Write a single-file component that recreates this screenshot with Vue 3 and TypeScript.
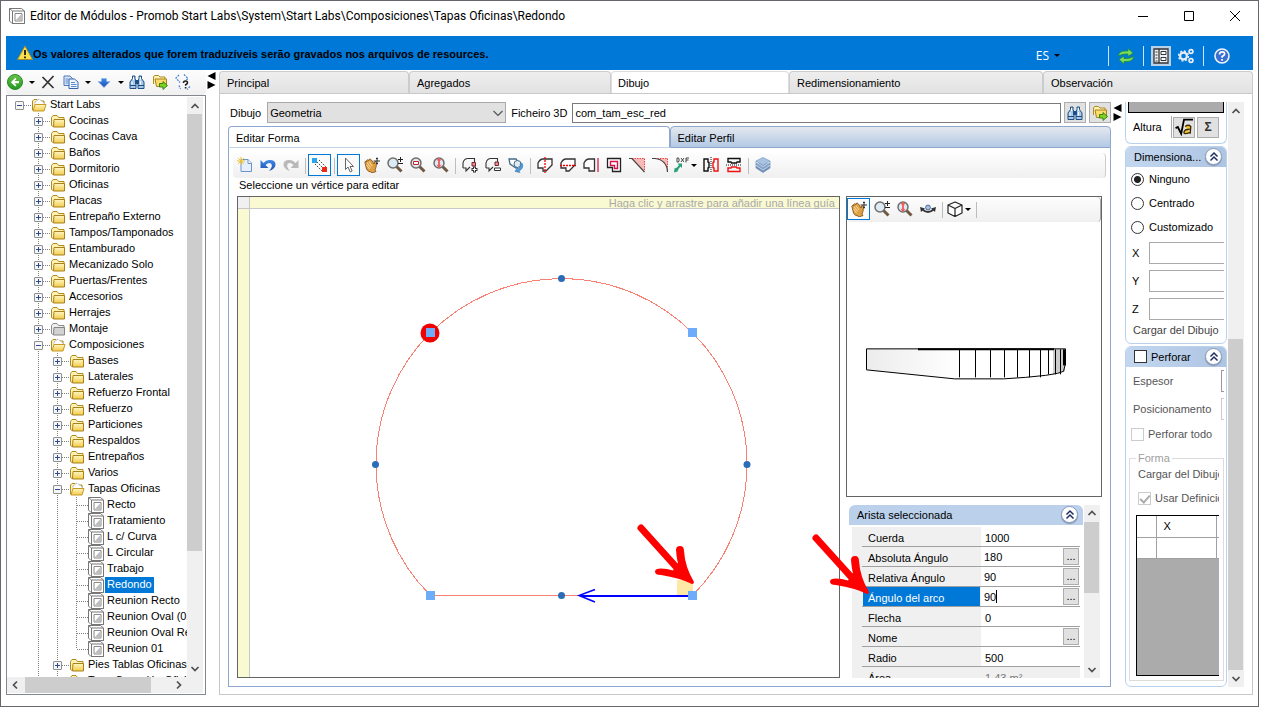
<script setup lang="ts">
import { ref } from 'vue'

interface TreeNode {
  label: string
  level: number
  kind: 'open' | 'folder' | 'gray' | 'module'
  toggle?: '+' | '-'
  last?: boolean
}

const folders = (level: number, labels: string[]): TreeNode[] =>
  labels.map((label) => ({ label, level, kind: 'folder', toggle: '+' }))

const modules = ['Recto', 'Tratamiento', 'L c/ Curva', 'L Circular', 'Trabajo', 'Redondo', 'Reunion Recto', 'Reunion Oval (02)', 'Reunion Oval Recto', 'Reunion 01']

const tree: TreeNode[] = [
  { label: 'Start Labs', level: 0, kind: 'open', toggle: '-' },
  ...folders(1, ['Cocinas', 'Cocinas Cava', 'Baños', 'Dormitorio', 'Oficinas', 'Placas', 'Entrepaño Externo', 'Tampos/Tamponados', 'Entamburado', 'Mecanizado Solo', 'Puertas/Frentes', 'Accesorios', 'Herrajes']),
  { label: 'Montaje', level: 1, kind: 'gray', toggle: '+' },
  { label: 'Composiciones', level: 1, kind: 'open', toggle: '-' },
  ...folders(2, ['Bases', 'Laterales', 'Refuerzo Frontal', 'Refuerzo', 'Particiones', 'Respaldos', 'Entrepaños', 'Varios']),
  { label: 'Tapas Oficinas', level: 2, kind: 'open', toggle: '-' },
  ...modules.map((label, i): TreeNode => ({ label, level: 3, kind: 'module', last: i === modules.length - 1 })),
  ...folders(2, ['Pies Tablas Oficinas', 'Tapa Conexión Oficinas']),
]

const selected = ref('Redondo')
const tabs = ['Principal', 'Agregados', 'Dibujo', 'Redimensionamiento', 'Observación']
const activeTab = ref('Dibujo')

interface Tool { icon: string; title: string; active?: boolean; caret?: boolean }
const toolGroups: Tool[][] = [
  [{ icon: 'new', title: 'Nuevo' }, { icon: 'undo', title: 'Deshacer' }, { icon: 'redo', title: 'Rehacer' }],
  [{ icon: 'snap', title: 'Vértices', active: true }],
  [
    { icon: 'cursor', title: 'Seleccionar', active: true },
    { icon: 'hand', title: 'Mover' },
    { icon: 'zoom', title: 'Zoom' },
    { icon: 'zoomrect', title: 'Zoom ventana' },
    { icon: 'zoomfit', title: 'Zoom extendido' },
  ],
  [{ icon: 'polyadd', title: 'Añadir vértice' }, { icon: 'polydel', title: 'Quitar vértice' }, { icon: 'polyrot', title: 'Rotar' }],
  [
    { icon: 'splitv', title: 'Dividir vertical' },
    { icon: 'splith', title: 'Dividir horizontal' },
    { icon: 'edge', title: 'Borde' },
    { icon: 'offset', title: 'Desplazar' },
    { icon: 'chamfer', title: 'Chaflán' },
    { icon: 'fillet', title: 'Redondear' },
    { icon: 'dxf', title: 'Importar DXF', caret: true },
    { icon: 'mirrorh', title: 'Espejo horizontal' },
    { icon: 'mirrorv', title: 'Espejo vertical' },
  ],
  [{ icon: 'layers', title: 'Capas' }],
]

interface Prop { id: string; label: string; value: string; more?: boolean; muted?: boolean }
const props = ref<Prop[]>([
  { id: 'cuerda', label: 'Cuerda', value: '1000' },
  { id: 'abs', label: 'Absoluta Ángulo', value: '180', more: true },
  { id: 'rel', label: 'Relativa Ángulo', value: '90', more: true },
  { id: 'arco', label: 'Ángulo del arco', value: '90', more: true },
  { id: 'flecha', label: 'Flecha', value: '0' },
  { id: 'nome', label: 'Nome', value: '', more: true },
  { id: 'radio', label: 'Radio', value: '500' },
  { id: 'area', label: 'Área', value: '1,43 m²', muted: true },
])
const activeProp = ref('arco')

const dimension = ref('Ninguno')
const dimensions = ['Ninguno', 'Centrado', 'Customizado']
const facets = [112, 128, 143, 157, 170, 182, 193, 201, 208, 213]
</script>

<template>
  <svg class="defs" aria-hidden="true">
    <defs>
      <linearGradient id="gFolder" x1="0" y1="0" x2="0" y2="1"><stop offset="0" stop-color="#fff6c0" /><stop offset="1" stop-color="#f2cb4a" /></linearGradient>
      <linearGradient id="gGreen" x1="0" y1="0" x2="0" y2="1"><stop offset="0" stop-color="#6cc24a" /><stop offset="1" stop-color="#1f9a1f" /></linearGradient>
      <linearGradient id="gBlue" x1="0" y1="0" x2="0" y2="1"><stop offset="0" stop-color="#3f8be8" /><stop offset="1" stop-color="#1c50b0" /></linearGradient>
      <linearGradient id="gFace" x1="0" y1="0" x2="1" y2="0"><stop offset="0" stop-color="#ececec" /><stop offset="1" stop-color="#ffffff" /></linearGradient>
      <symbol id="folder" viewBox="0 0 16 16"><path d="M1.5 12.5v-8l1.5-2h4l1.5 2h5.5v9h-11z" fill="#fdf3b4" stroke="#b08a1c" /><path d="M4 6.5h10.5v7.5h-11z" fill="url(#gFolder)" stroke="#a8821a" /></symbol>
      <symbol id="gray" viewBox="0 0 16 16"><path d="M1.5 12.5v-8l1.5-2h4l1.5 2h5.5v9h-11z" fill="#eee" stroke="#8c8c8c" /><path d="M4 6.5h10.5v7.5h-11z" fill="#d2d2d2" stroke="#858585" /></symbol>
      <symbol id="open" viewBox="0 0 16 16"><path d="M1.5 13v-9l1.5-1.5h3l1 1.500h6v9z" fill="#fdf3b4" stroke="#b08a1c" /><path d="M4 5l4-3 5 4v3H4z" fill="#fff" stroke="#8ba3c4" stroke-dasharray="1 1" /><path d="M4 7.500h11l-2 6.500h-11z" fill="url(#gFolder)" stroke="#c49a2a" /></symbol>
      <symbol id="module" viewBox="0 0 16 16"><path d="M.5.5h12l3 2.500v12.500h-12.500l-2.500-2.500z" fill="#fff" stroke="#777" /><path d="M3.500 3h12v12.500h-12zM.5.5l3 2.500" fill="none" stroke="#777" /><path d="M6 5.500h7v7.500h-7z" fill="#fff" stroke="#888" /><path d="M12.500 6v6.500h-6z" fill="#bdbdbd" /></symbol>
      <symbol id="back" viewBox="0 0 16 16"><circle cx="8" cy="8" r="7.500" fill="url(#gGreen)" stroke="#2b8a2b" /><path d="M12 7H7.500L9.500 5 8.300 3.800 3.800 8.200l4.500 4.300 1.200-1.200L7.500 9.300H12z" fill="#fff" /></symbol>
      <symbol id="cross" viewBox="0 0 16 16"><path d="M2.500 3l11 11M13.500 2l-11 12" stroke="#333" stroke-width="1.700" fill="none" /></symbol>
      <symbol id="copy" viewBox="0 0 16 16"><path d="M1 2h6l2.500 2.500v7H1z" fill="#dbe8fa" stroke="#4e78b8" /><path d="M6 5h5.500l3.500 3v6.500H6z" fill="#eef5ff" stroke="#3565ad" /><path d="M2.500 5h3M2.500 7h3M2.500 9h3M8 8.500h4M8 10.500h5.500M8 12.500h5.500" stroke="#5b8bd0" /></symbol>
      <symbol id="down" viewBox="0 0 16 16"><path d="M5.500 4.500h5v3h3.500L8 13.500 2 7.500h3.500z" fill="url(#gBlue)" stroke="#8fb4e8" stroke-width=".6" /></symbol>
      <symbol id="binoc" viewBox="0 0 16 16"><path d="M1 14.500V8l2.500-3.500V2h2.500v2.500L7 7v7.500z" fill="#a9c8e8" stroke="#1d4f86" /><path d="M15 14.500V8l-2.500-3.500V2H10v2.500L9 7v7.500z" fill="#a9c8e8" stroke="#1d4f86" /><path d="M6.500 6.500h3v3h-3zM1 11.500h6M9 11.500h6" fill="#1d4f86" stroke="#1d4f86" /><path d="M3 7.500v3M11.500 7v3.500M4.500 3v3M11.300 3v3" stroke="#fff" /></symbol>
      <symbol id="go" viewBox="0 0 16 16"><path d="M1.500 10V3l1-1.500h4L8 3h5v3" fill="#fdf3b4" stroke="#b08a1c" /><path d="M3 5h11.500v7.500h-10z" fill="#fbdc6c" stroke="#a8821a" /><path d="M7.500 9.500h3.500V7.500l4.500 4-4.500 4v-2.500H7.500z" fill="#7ed321" stroke="#30780d" stroke-width=".9" /></symbol>
      <symbol id="helpb" viewBox="0 0 16 16"><path d="M4 1L1 4l4 4.500M9 .5l4 4-2.500 2.500M4 11.500l1.500 3.500M15 12.500l-3 3" stroke="#4b82d8" stroke-dasharray="2 1" fill="none" stroke-width="1.300" /><path d="M8.500 9q0-2 2-2t2 1.800q0 1.200-1.800 1.900v1M10.600 13v1.500" stroke="#222" stroke-width="1.600" fill="none" /></symbol>
      <symbol id="new" viewBox="0 0 16 16"><path d="M4 2.500h7l3.500 3.500v8.500H4z" fill="#e6effc" stroke="#6d93cc" /><path d="M11 2.500v4h3.500" fill="#fff" stroke="#6d93cc" /><path d="M4 0v8M0 4h8M1.200 1.200l5.600 5.600M6.800 1.200L1.200 6.800" stroke="#edc12c" /></symbol>
      <symbol id="undo" viewBox="0 0 16 16"><path d="M.5 3v8h8L5.500 8q3-3 5.500-1.500Q13.500 9 9 14q7-2.500 6.500-7T9 3Q6 3 3.500 6z" fill="url(#gBlue)" /></symbol>
      <symbol id="redo" viewBox="0 0 16 16"><path d="M15.500 3v8h-8l3-3q-3-3-5.500-1.500Q2.500 9 7 14 0 11.500.5 7T7 3q3 0 5.500 3z" fill="#b9b9b9" /></symbol>
      <symbol id="snap" viewBox="0 0 16 16"><path d="M3 7l7 7M5 5l7 7M7 3l7 7" stroke="#444" stroke-dasharray="1.500 1.200" /><path d="M0 1h5v5H0z" fill="#2aa5ef" /><path d="M10 10h5v5h-5z" fill="#ec2a16" /></symbol>
      <symbol id="cursor" viewBox="0 0 16 16"><path d="M4.500 1v11.500L7 10l2.200 5 2-1L9 9.500h3.500z" fill="#fff" stroke="#666" /></symbol>
      <symbol id="hand" viewBox="0 0 16 16"><path d="M.8 5q1-1.500 2.200 0L2.500 3.500q1-1.500 2.500 0L5 2.500q1.500-1 2.500.5l2.500 4 .5-2q1.500-1 2 .5 0 5-1.500 7.500l1 1.500-4 1.500-1-1q-3 0-4.500-3z" fill="#dfa044" stroke="#7a4a12" stroke-width=".8" /><path d="M3 5.500l3.500 5M5 4.500l3 4.500M2.500 8l3 4" stroke="#fbe3ae" stroke-width=".9" /><path d="M13 .500v7M9.500 4H16M12 1.500h2M12 6.500h2" stroke="#333" /></symbol>
      <symbol id="lens" viewBox="0 0 16 16"><path d="M9 9l5.500 5.500" stroke="#6f5941" stroke-width="3" /><circle cx="6" cy="6" r="5" fill="#dceaf3" stroke="#6e6e6e" stroke-width="1.500" /></symbol>
      <symbol id="zoom" viewBox="0 0 16 16"><use href="#lens" /><path d="M13.500 0v5M11 2.500h5M11 6.500h5" stroke="#222" /></symbol>
      <symbol id="zoomrect" viewBox="0 0 16 16"><use href="#lens" /><path d="M3.500 4.500h5v3h-5z" fill="#fff" stroke="#c22" /></symbol>
      <symbol id="zoomfit" viewBox="0 0 16 16"><use href="#lens" /><path d="M6 2v7.500M4.500 3.500L6 2l1.500 1.500M4.500 8L6 9.500 7.500 8" stroke="#f45a5a" stroke-width="1.800" fill="none" /></symbol>
      <symbol id="polyadd" viewBox="0 0 16 16"><path d="M1 11V6q1-4.500 5-4.500h6.500V5M1 11h3v3l4-4" fill="none" stroke="#333" stroke-width="1.100" /><path d="M10 5.500h3.500V9H10z" fill="#f58a94" stroke="#6f2b30" /><path d="M12.500 9.500v6M9.500 12.500h6" stroke="#333" stroke-width="3" /><path d="M12.500 10.500v4M10.500 12.500h4" stroke="#fff" /></symbol>
      <symbol id="polydel" viewBox="0 0 16 16"><path d="M1 11V6q1-4.500 5-4.500h6.500V5M1 11h3v3l4-4" fill="none" stroke="#333" stroke-width="1.100" /><path d="M10 5h3.500v3.500H10z" fill="#f58a94" stroke="#6f2b30" /><path d="M9.500 11h6v2.500h-6z" fill="#fff" stroke="#333" /></symbol>
      <symbol id="polyrot" viewBox="0 0 16 16"><path d="M1 2h7l3 4-3 5-6-4z" fill="#fff" stroke="#456d88" stroke-width="1.300" /><circle cx="9.500" cy="7" r="3.500" fill="#dfeaf2" stroke="#456d88" /><path d="M14 6q2.500 5-3 8l1 1.500-5-1 2.500-4 .8 1.500q3-2 1.700-5z" fill="#4f9adc" stroke="#2d6ba4" stroke-width=".5" /></symbol>
      <symbol id="splitv" viewBox="0 0 16 16"><path d="M1 11V6q2-4 5-4h9v6l-6 6H6v-3z" fill="#fff" stroke="#333" stroke-width="1.300" /><path d="M8 0v16" stroke="#e00" stroke-dasharray="2 1" stroke-width="1.300" /></symbol>
      <symbol id="splith" viewBox="0 0 16 16"><path d="M1 11V6q2-4 5-4h9v6l-6 6H6v-3z" fill="#fff" stroke="#333" stroke-width="1.300" /><path d="M0 8.500h16" stroke="#e00" stroke-dasharray="2 1" stroke-width="1.300" /></symbol>
      <symbol id="edge" viewBox="0 0 16 16"><path d="M11.500 2H6Q3 2 1 6v5h5v3h5.500z" fill="#fff" stroke="#333" stroke-width="1.300" /><path d="M15 1v14" stroke="#d8204a" stroke-width="1.300" /></symbol>
      <symbol id="offset" viewBox="0 0 16 16"><path d="M1.500 1.500h13v13h-8v-4h-5z" fill="#fff" stroke="#222" stroke-width="1.300" /><path d="M4.500 4.500h7v7h-3v-3h-4z" fill="#fff" stroke="#d8104a" stroke-width="1.400" /></symbol>
      <symbol id="chamfer" viewBox="0 0 16 16"><path d="M2 1.500h13.500V14z" fill="#f8b9b9" /><path d="M3 1.500h12.500v13" stroke="#e44" stroke-dasharray="1.500 1" fill="none" /><path d="M0 1.500h3L15.500 15" stroke="#444" fill="none" stroke-width="1.200" /></symbol>
      <symbol id="fillet" viewBox="0 0 16 16"><path d="M4 1.500h11.500V12Q13 3 4 1.500z" fill="#f8b9b9" /><path d="M3 1.500h12.500v13" stroke="#e44" stroke-dasharray="1.500 1" fill="none" /><path d="M0 1.500h3Q15 3 15.500 15" stroke="#444" fill="none" stroke-width="1.200" /></symbol>
      <symbol id="dxf" viewBox="0 0 16 16"><path d="M4 5V1h1.500q1.500 2 0 4zM8 1l3 4M11 1L8 5M13 5.500V1h3M13 3h2.500" fill="none" stroke="#333" stroke-width=".9" /><path d="M1 15.500l.500-4 2.500-1 2-2.500L4.500 6.500H9V11L7.500 9.500 5.500 12l-1 2.500z" fill="#28a078" /></symbol>
      <symbol id="mirrorh" viewBox="0 0 16 16"><path d="M1 2h4v3l1 .5v5L5 11v3H1z" fill="none" stroke="#111" stroke-width="1.400" /><path d="M15 2h-4v3l-1 .5v5l1 .5v3h4z" fill="none" stroke="#e11" stroke-width="1.400" /><path d="M8 0v16" stroke="#111" stroke-dasharray="1 1" /></symbol>
      <symbol id="mirrorv" viewBox="0 0 16 16"><path d="M2 1.500h12V5h-3l-.5 1h-5L5 5H2z" fill="none" stroke="#111" stroke-width="1.400" /><path d="M2 14.500h12V11h-3l-.5-1h-5L5 11H2z" fill="none" stroke="#e11" stroke-width="1.400" /><path d="M0 8h16" stroke="#111" stroke-dasharray="1 1" /></symbol>
      <symbol id="layers" viewBox="0 0 16 16"><path d="M1 11l7 4.500 7-4.500V9H1z" fill="#6f8fb8" /><path d="M1 8l7 4.500L15 8V6H1z" fill="#88a6cc" /><path d="M1 8.500l7 4.500 7-4.500M1 5l7 4.500L15 5" stroke="#e6eef8" stroke-width=".7" fill="none" /><path d="M8 .5l7 3.500-7 4.500L1 4z" fill="#a9c3e2" stroke="#6c8db6" stroke-width=".6" /><path d="M1 4v7l7 4.500L15 11V4" fill="none" stroke="#6c8db6" stroke-width=".7" /></symbol>
      <symbol id="orbit" viewBox="0 0 16 16"><circle cx="8" cy="6.500" r="2.400" fill="#a9c4e6" stroke="#4b6a94" /><path d="M2.500 8.500q5.500 5 11 0" stroke="#333" stroke-width="1.700" fill="none" /><path d="M0 6l5 1.500-4 3.500zM16 6l-5 1.500 4 3.500z" fill="#333" /></symbol>
      <symbol id="cube" viewBox="0 0 16 16"><path d="M1 4l7-3 7 3v8l-7 3.500L1 12zM1 4l7 3.500L15 4M8 7.500v8" fill="#fff" stroke="#222" stroke-width="1.200" stroke-linejoin="round" /></symbol>
      <symbol id="refresh" viewBox="0 0 16 16"><path d="M.5 8Q1 3 7 3h3V.5l5 4.500-5 3.500V6H7Q4 6 .5 8z" fill="#7bdc5a" stroke="#1e8a3a" stroke-width=".8" /><path d="M15.500 8.500q-.5 5-6.500 5H6v2.500L1 11.500 6 8v2.500h3q3 0 6.500-2z" fill="#7bdc5a" stroke="#1e8a3a" stroke-width=".8" /></symbol>
      <symbol id="form" viewBox="0 0 16 16"><path d="M1 1h14v14H1zM6 1v14" fill="#eef2f6" stroke="#333" stroke-width="1.300" /><path d="M2.500 4h2M2.500 7h2M2.500 10h2M2.500 13h2" stroke="#333" /><path d="M8 3.500h5v3H8zM8 9.500h5v3H8z" fill="#fff" stroke="#333" /></symbol>
      <symbol id="gears" viewBox="0 0 16 16"><circle cx="5.500" cy="8" r="3.400" fill="none" stroke="#e8eef5" stroke-width="2.200" /><circle cx="5.500" cy="8" r="5" fill="none" stroke="#e8eef5" stroke-width="1.400" stroke-dasharray="2 1.900" /><circle cx="13" cy="3.500" r="1.900" fill="none" stroke="#e8eef5" stroke-width="1.700" /><circle cx="13" cy="12.500" r="1.900" fill="none" stroke="#e8eef5" stroke-width="1.700" /></symbol>
      <symbol id="help" viewBox="0 0 16 16"><circle cx="8" cy="8" r="7" fill="#3b6fd0" stroke="#eef3fb" stroke-width="1.600" /><path d="M5.500 6.500q0-2.700 2.600-2.700t2.500 2.200q0 1.300-2.500 2.600v1.200M8.100 11v1.800" stroke="#fff" stroke-width="1.700" fill="none" /></symbol>
      <symbol id="warn" viewBox="0 0 16 16"><path d="M8 1l7.500 13.500H.5z" fill="#fbe04a" stroke="#a88a28" stroke-linejoin="round" /><path d="M8 5v5M8 11.500v1.800" stroke="#222" stroke-width="1.900" /></symbol>
      <symbol id="root" viewBox="0 0 16 16"><path d="M.5 9l2-1 3 6L8 1.500h8" stroke="#000" stroke-width="1.600" fill="none" /><path d="M9 7.500q3-2 5 0l-.500 6.500M13 10q-4.500 0-5 2.500t5 .5" fill="#f7c62e" stroke="#3a2a00" stroke-width="1.200" /></symbol>
      <symbol id="chev" viewBox="0 0 16 16"><path d="M4.500 7.500L8 4l3.500 3.500M4.500 11.500L8 8l3.500 3.500" stroke="#1f2f63" stroke-width="1.500" fill="none" /></symbol>
      <symbol id="up" viewBox="0 0 10 10"><path d="M1.500 7L5 3.500 8.500 7" stroke="#505050" stroke-width="1.700" fill="none" /></symbol>
      <symbol id="dn" viewBox="0 0 10 10"><path d="M1.500 3L5 6.500 8.500 3" stroke="#505050" stroke-width="1.700" fill="none" /></symbol>
      <symbol id="lf" viewBox="0 0 10 10"><path d="M7 1.500L3.500 5 7 8.500" stroke="#505050" stroke-width="1.700" fill="none" /></symbol>
      <symbol id="rt" viewBox="0 0 10 10"><path d="M3 1.500L6.500 5 3 8.500" stroke="#505050" stroke-width="1.700" fill="none" /></symbol>
      <symbol id="pointer" viewBox="0 0 60 62"><path d="M5 5L42 46" stroke="#f00" stroke-width="7" stroke-linecap="round" /><path d="M44 23q4 0 4 5 1 16 10 31 0 2-2 2-12-6-31-9-6 0-6-3.500 0-3 6-3 6 0 12 2l5-8Q41 38 40 27q0-4 4-4z" fill="#f00" /></symbol>
    </defs>
  </svg>

  <div class="window">
    <header class="titlebar">
      <svg class="i16"><use href="#module" /></svg>
      <h1>Editor de Módulos - Promob Start Labs\System\Start Labs\Composiciones\Tapas Oficinas\Redondo</h1>
      <button class="win" aria-label="Minimizar"><svg viewBox="0 0 12 12"><path d="M1 6.500h10" stroke="#000" /></svg></button>
      <button class="win" aria-label="Maximizar"><svg viewBox="0 0 12 12"><path d="M1.500 1.500h9v9h-9z" stroke="#000" fill="none" /></svg></button>
      <button class="win" aria-label="Cerrar"><svg viewBox="0 0 12 12"><path d="M1 1l10 10M11 1L1 11" stroke="#000" /></svg></button>
    </header>

    <div class="banner">
      <svg class="i16"><use href="#warn" /></svg>
      <strong>Os valores alterados que forem traduzíveis serão gravados nos arquivos de resources.</strong>
      <button class="lang">ES<i class="caret"></i></button>
      <span class="bsep"></span>
      <button class="bbtn" aria-label="Actualizar"><svg class="i16"><use href="#refresh" /></svg></button>
      <span class="bsep"></span>
      <button class="bbtn on" aria-label="Formulario"><svg class="i16"><use href="#form" /></svg></button>
      <button class="bbtn gear" aria-label="Configuración"><svg class="i16"><use href="#gears" /></svg></button>
      <span class="bsep"></span>
      <button class="bbtn last" aria-label="Ayuda"><svg class="i16"><use href="#help" /></svg></button>
    </div>

    <div class="main">
      <aside class="left">
        <div class="lefttools">
          <button aria-label="Atrás"><svg class="i16"><use href="#back" /></svg></button>
          <button class="drop" aria-label="Historial"><i class="caret"></i></button>
          <button aria-label="Eliminar"><svg class="i16"><use href="#cross" /></svg></button>
          <button class="gap" aria-label="Copiar"><svg class="i16"><use href="#copy" /></svg></button>
          <button class="drop" aria-label="Opciones de copia"><i class="caret"></i></button>
          <button aria-label="Bajar"><svg class="i16"><use href="#down" /></svg></button>
          <button class="drop" aria-label="Opciones de orden"><i class="caret"></i></button>
          <button aria-label="Buscar"><svg class="i16"><use href="#binoc" /></svg></button>
          <button class="gap" aria-label="Ir a carpeta"><svg class="i16"><use href="#go" /></svg></button>
          <button class="gap" aria-label="Referencias"><svg class="i16"><use href="#helpb" /></svg></button>
        </div>
        <div class="treebox">
          <div class="treerow">
            <ul class="tree" role="tree">
              <li v-for="(n, i) in tree" :key="i" role="treeitem" @click="selected = n.label">
                <span v-for="c in n.level + 1" :key="c" class="cell" :class="{ line: c > 1, end: n.last && c === n.level + 1, own: c === n.level + 1 }">
                  <button v-if="n.toggle && c === n.level + 1" class="toggle" :class="{ plus: n.toggle === '+' }" :aria-label="n.label"></button>
                </span>
                <svg class="i16 nodeicon"><use :href="'#' + n.kind" /></svg>
                <span class="label" :class="{ sel: n.label === selected }">{{ n.label }}</span>
              </li>
            </ul>
            <div class="vbar">
              <button aria-label="Subir"><svg><use href="#up" /></svg></button>
              <div class="track"><div class="thumb tree-thumb"></div></div>
              <button aria-label="Bajar"><svg><use href="#dn" /></svg></button>
            </div>
          </div>
          <div class="hbar">
            <button aria-label="Izquierda"><svg><use href="#lf" /></svg></button>
            <div class="htrack"><div class="hthumb"></div></div>
            <button aria-label="Derecha"><svg><use href="#rt" /></svg></button>
          </div>
        </div>
      </aside>

      <button class="split" aria-label="Contraer árbol"><svg viewBox="0 0 9 18"><path d="M8.500 0v8L.5 4zM.5 9v8l8-4z" /></svg></button>

      <section class="center">
        <div class="tabs" role="tablist">
          <button v-for="t in tabs" :key="t" role="tab" class="tab" :class="{ active: t === activeTab }" @click="activeTab = t">{{ t }}</button>
        </div>
        <div class="body">
          <div class="editor">
            <div class="formrow">
              <label for="dibujo">Dibujo</label>
              <span class="selwrap">
                <select id="dibujo"><option>Geometria</option></select>
                <svg viewBox="0 0 10 10"><path d="M.5 3L5 7.500 9.500 3" stroke="#555" stroke-width="1.200" fill="none" /></svg>
              </span>
              <label for="fichero">Ficheiro 3D</label>
              <input id="fichero" class="file" value="com_tam_esc_red">
              <button class="sq" aria-label="Buscar fichero"><svg class="i16"><use href="#binoc" /></svg></button>
              <button class="sq" aria-label="Abrir fichero"><svg class="i16"><use href="#go" /></svg></button>
            </div>
            <div class="subtabs" role="tablist">
              <button role="tab" class="subtab active">Editar Forma</button>
              <button role="tab" class="subtab">Editar Perfil</button>
            </div>
            <div class="panel">
              <div class="toolbar">
                <template v-for="(g, gi) in toolGroups" :key="gi">
                  <span v-if="gi" class="sep"></span>
                  <button v-for="t in g" :key="t.icon" class="tool" :class="{ on: t.active, wide: t.caret }" :title="t.title">
                    <svg class="i16"><use :href="'#' + t.icon" /></svg><i v-if="t.caret" class="caret"></i>
                  </button>
                </template>
              </div>
              <p class="hint">Seleccione un vértice para editar</p>
              <div class="panes">
                <div class="canvas">
                  <div class="ruler-top"><span class="corner"></span><span class="guide">Haga clic y arrastre para añadir una línea guía</span></div>
                  <div class="ruler-left"></div>
                  <svg class="drawing" viewBox="0 0 601 480">
                    <path d="M439 383h16v15h-16z" fill="#ffe8a6" />
                    <path d="M454.500 398.500A185.500 185.500 0 1 0 192.500 398.500z" fill="none" stroke="#fa8072" shape-rendering="crispEdges" />
                    <path d="M454 399H343" stroke="#00f" stroke-width="2" />
                    <path d="M357 392.500l-16 6 16 6.500" fill="none" stroke="#00f" stroke-width="1.500" />
                    <circle cx="323.500" cy="81.500" r="3.500" class="mid" /><circle cx="137.500" cy="267.500" r="3.500" class="mid" />
                    <circle cx="509" cy="267.500" r="3.500" class="mid" /><circle cx="323.500" cy="398.500" r="3.500" class="mid" />
                    <circle cx="192" cy="136" r="9.500" fill="#f00000" />
                    <path class="vx" d="M188 131h9v9h-9zM450 131h9v9h-9zM188 394h9v9h-9zM450 394h9v9h-9z" />
                    <use href="#pointer" x="398" y="326" width="60" height="62" />
                  </svg>
                </div>
                <div class="rightcol">
                  <div class="view">
                    <div class="viewtools">
                      <button class="tool on" title="Mover"><svg class="i16"><use href="#hand" /></svg></button>
                      <button class="tool" title="Zoom"><svg class="i16"><use href="#zoom" /></svg></button>
                      <button class="tool" title="Zoom extendido"><svg class="i16"><use href="#zoomfit" /></svg></button>
                      <button class="tool" title="Orbitar"><svg class="i16"><use href="#orbit" /></svg></button>
                      <span class="sep"></span>
                      <button class="tool wide" title="Vista"><svg class="i16"><use href="#cube" /></svg><i class="caret"></i></button>
                      <span class="sep"></span>
                    </div>
                    <svg class="scene" viewBox="0 0 254 273">
                      <path d="M19.500 126.500h199v14.500l-2 8-6 2-12 2-20 2-22 1.500h-49l-88-9z" fill="#fff" />
                      <path d="M19.500 126.500h92v30l-92-9z" fill="url(#gFace)" />
                      <path d="M206 127h12v22l-12 3z" fill="#ccc" />
                      <path d="M19.500 126.500h199v14.500l-2 8-6 2-12 2-20 2-22 1.500h-49l-88-9z" fill="none" stroke="#000" />
                      <path d="M71 127h136" stroke="#000" stroke-width="2" />
                      <path d="M217.500 127v16" stroke="#000" stroke-width="3" />
                      <path v-for="x in facets" :key="x" :d="`M${x}.5 127v${x > 200 ? 25 : 28}`" stroke="#000" />
                    </svg>
                  </div>
                  <div class="propwrap">
                    <div class="props">
                      <div class="phead"><span>Arista seleccionada</span><button class="round" aria-label="Contraer"><svg class="i16"><use href="#chev" /></svg></button></div>
                      <div class="pgrid">
                        <div v-for="p in props" :key="p.id" class="prow" :class="{ cur: p.id === activeProp }">
                          <label :for="p.id">{{ p.label }}</label>
                          <span class="pval" :class="{ edit: p.more, muted: p.muted }">
                            <span v-if="p.id === activeProp" class="textcaret"></span>
                            <input :id="p.id" v-model="p.value" :disabled="p.muted" @focus="activeProp = p.id">
                            <button v-if="p.more" class="more" :aria-label="'Más: ' + p.label">...</button>
                          </span>
                        </div>
                      </div>
                    </div>
                    <div class="vbar">
                      <button aria-label="Subir"><svg><use href="#up" /></svg></button>
                      <div class="track"><div class="thumb prop-thumb"></div></div>
                      <button aria-label="Bajar"><svg><use href="#dn" /></svg></button>
                    </div>
                    <svg class="marker"><use href="#pointer" /></svg>
                  </div>
                </div>
              </div>
            </div>
          </div>

          <button class="split inner" aria-label="Contraer panel"><svg viewBox="0 0 9 18"><path d="M8.500 0v8L.5 4zM.5 9v8l8-4z" /></svg></button>

          <aside class="side">
            <div class="cards">
              <div class="card first">
                <div class="graybox"></div>
                <div class="altura"><span>Altura</span><i></i><button class="sq" aria-label="Fórmula"><svg class="i20"><use href="#root" /></svg></button><button class="sq sigma">Σ</button></div>
              </div>
              <div class="card second">
                <div class="chead"><span>Dimensiona...</span><button class="round" aria-label="Contraer"><svg class="i16"><use href="#chev" /></svg></button></div>
                <label v-for="d in dimensions" :key="d" class="opt"><input v-model="dimension" type="radio" name="dim" :value="d">{{ d }}</label>
                <div v-for="a in ['X', 'Y', 'Z']" :key="a" class="axis"><label :for="'axis' + a">{{ a }}</label><input :id="'axis' + a"></div>
                <div class="load">Cargar del Dibujo</div>
              </div>
              <div class="card third">
                <div class="chead"><label><input type="checkbox">Perforar</label><button class="round" aria-label="Contraer"><svg class="i16"><use href="#chev" /></svg></button></div>
                <div class="frow"><label for="esp">Espesor</label><input id="esp"></div>
                <div class="frow"><label for="pos">Posicionamento</label><input id="pos" class="soft" disabled></div>
                <label class="chk"><input type="checkbox" disabled>Perforar todo</label>
                <fieldset>
                  <legend>Forma</legend>
                  <div class="ftext">Cargar del Dibujo</div>
                  <label class="chk in"><input type="checkbox" checked disabled>Usar Definición</label>
                  <div class="gridbox">
                    <table><thead><tr><th class="rh"></th><th>X</th><th class="nx"></th></tr></thead><tbody><tr><td></td><td></td><td class="nx"></td></tr></tbody></table>
                  </div>
                </fieldset>
              </div>
            </div>
            <div class="vbar">
              <button aria-label="Subir"><svg><use href="#up" /></svg></button>
              <div class="track low"><div class="thumb side-thumb"></div></div>
              <button aria-label="Bajar"><svg><use href="#dn" /></svg></button>
            </div>
          </aside>
        </div>
      </section>
    </div>
  </div>
</template>

<style>
html, body { margin: 0; background: #fff; }
</style>

<style scoped>
* { box-sizing: border-box; }
.defs { position: absolute; width: 0; height: 0; }
.window {
  display: flex; flex-direction: column; height: calc(100vh - 2px); margin-right: 9px;
  border: 1px solid #66666c; background: #fff; color: #000; padding-bottom: 11px;
  font: 11px/14px "Liberation Sans", Arial, sans-serif; overflow: hidden;
}
button, input, select { font: inherit; color: inherit; margin: 0; padding: 0; border: 0; background: none; border-radius: 0; outline: 0; }
button { display: flex; align-items: center; justify-content: center; flex: none; }
svg { display: block; flex: none; }
.i16 { width: 16px; height: 16px; }
.i20 { width: 18px; height: 18px; }
.caret { width: 0; height: 0; border: 3px solid transparent; border-top-color: #000; border-bottom: 0; }

.titlebar { display: flex; align-items: center; flex: none; height: 35px; padding: 0 0 5px 8px; }
.titlebar h1 { flex: 1; min-width: 0; margin: 0 0 0 5px; font: 12px/18px Roboto, "Noto Sans", sans-serif; white-space: nowrap; overflow: hidden; }
.win { width: 46px; height: 30px; }
.win svg { width: 12px; height: 12px; }

.banner { display: flex; align-items: center; flex: none; height: 34px; margin: 0 5px; padding-left: 11px; background: #0078d7; }
.banner strong { flex: 1; min-width: 0; white-space: nowrap; overflow: hidden; padding-top: 2px; }
.lang, .bsep, .bbtn { margin-top: 5px; }
.lang { color: #fff; gap: 5px; margin-right: 48px; font: 12px/16px "Open Sans", sans-serif; }
.bsep { width: 1px; height: 20px; background: #cfe3f7; }
.bbtn { width: 22px; height: 20px; margin-left: 6px; margin-right: 6px; }
.bbtn.on { width: 20px; margin-left: 7px; margin-right: 7px; background: #b8d0e8; }
.bbtn.gear { margin-left: -3px; margin-right: 6px; }
.bbtn.last { margin-left: 7px; margin-right: 20px; }

.main { display: flex; flex: 1; min-height: 0; padding: 0 5px; }
.left { display: flex; flex-direction: column; width: 200px; flex: none; }
.lefttools { display: flex; align-items: center; height: 25px; padding: 0 0 1px 1px; border-radius: 4px; background: linear-gradient(#fdfdfd, #f0f0f0); }
.lefttools .drop { width: 17px; }
.lefttools .gap { margin-left: 7px; }
.treebox { display: flex; flex-direction: column; flex: 1; min-height: 0; border: 1px solid #828790; padding: 1px 2px 1px 0; }
.treerow { display: flex; flex: 1; min-height: 0; }
.tree { flex: 1; min-width: 0; margin: 0; padding: 0 0 0 3px; list-style: none; overflow: hidden; }
.tree li { display: flex; height: 16px; white-space: nowrap; }
.cell { display: flex; align-items: center; justify-content: center; width: 19px; flex: none; }
.cell.line { background: repeating-linear-gradient(to bottom, #808080 0 1px, transparent 1px 2px) 9px 0 / 1px 100% no-repeat; }
.cell.line.end { background-size: 1px 50%; }
.cell.own { margin-right: 2px; position: relative; }
.cell.own::after { content: ""; position: absolute; left: 10px; right: -2px; top: 8px; height: 1px; background: repeating-linear-gradient(to right, #808080 0 1px, transparent 1px 2px); }
.toggle { position: relative; z-index: 1; width: 9px; height: 9px; border: 1px solid #8e8f8f; border-radius: 1px; background: linear-gradient(#2b4b96, #2b4b96) center / 5px 1px no-repeat, #f6f6f6; }
.toggle.plus { background: linear-gradient(#2b4b96, #2b4b96) center / 5px 1px no-repeat, linear-gradient(#2b4b96, #2b4b96) center / 1px 5px no-repeat, #f6f6f6; }
.nodeicon { margin-right: 1px; }
.label { height: 16px; padding: 0 2px; }
.label.sel { background: #0078d7; color: #fff; }

.vbar { display: flex; flex-direction: column; width: 16px; flex: none; background: #f0f0f0; }
.vbar button, .hbar button { width: 16px; height: 17px; }
.vbar svg, .hbar svg { width: 10px; height: 10px; }
.track { flex: 1; display: flex; flex-direction: column; }
.thumb { background: #cdcdcd; margin-right: 1px; }
.tree-thumb { height: 80%; }
.prop-thumb { height: 51%; }
.track.low { justify-content: flex-end; }
.side-thumb { height: 60%; }
.hbar { display: flex; height: 16px; flex: none; background: #f0f0f0; }
.hbar button { height: 16px; }
.htrack { flex: 1; padding-left: 2px; display: flex; }
.hthumb { width: 86%; background: #cdcdcd; }
.hbar button:last-child { margin-right: 16px; }

.split { width: 13px; align-items: flex-start; padding-top: 2px; }
.split svg { width: 9px; height: 18px; margin-right: 2px; }
.split.inner { width: 14px; }

.center { display: flex; flex-direction: column; flex: 1; min-width: 0; padding-top: 1px; }
.tabs { display: grid; grid-template-columns: 190fr 202fr 178fr 254fr 210fr; height: 22px; flex: none; }
.tab { justify-content: flex-start; padding: 0 0 0 7px; border: 1px solid #ccc; border-bottom: 0; border-radius: 4px 4px 0 0; background: linear-gradient(#eee, #e2e2e2); }
.tab.active { background: #fff; border-color: #ddd; padding-left: 6px; }
.body { display: flex; flex: 1; min-height: 0; border: 1px solid #c8c8c8; padding: 8px 8px 7px; }
.editor { display: flex; flex-direction: column; flex: 1; min-width: 0; }

.formrow { display: flex; align-items: center; height: 21px; flex: none; padding: 0 0 0 2px; gap: 3px; }
.formrow label { white-space: nowrap; }
.selwrap { position: relative; display: flex; flex: none; width: 239px; margin: 0 2px 0 3px; }
.selwrap select { appearance: none; width: 100%; height: 21px; border: 1px solid #a9a9a9; background: #e1e1e1; padding: 0 2px; }
.selwrap svg { position: absolute; right: 3px; top: 6px; width: 10px; height: 10px; pointer-events: none; }
.file { flex: 1; min-width: 0; height: 20px; border: 1px solid #7a7a7a; background: #fff; padding: 0 2px; margin-left: 2px; }
.sq { width: 22px; height: 21px; border: 1px solid #adadad; background: #e1e1e1; }

.subtabs { display: flex; height: 22px; flex: none; margin-top: 3px; }
.subtab { flex: 1; justify-content: flex-start; padding: 2px 0 0 7px; border: 1px solid #8ea8cd; border-radius: 4px 4px 0 0; background: linear-gradient(#e4e8ef, #b3c9e4); }
.subtab.active { background: #fff; border-bottom-color: #c3d5ea; }
.panel { display: flex; flex-direction: column; flex: 1; min-height: 0; border: 1px solid #8ea8cd; border-top: 0; padding: 5px 4px 8px; }
.toolbar { display: flex; align-items: flex-start; height: 25px; flex: none; padding-top: 1px; border-radius: 4px; background: linear-gradient(#fdfdfd, #f0f0f0); border-right: 1px solid #ccc; }
.tool { width: 23px; height: 22px; }
.tool.on { border: 1px solid #0078d7; background: #fbfbfb; }
.tool.wide { width: 28px; }
.tool.wide .caret { margin-left: 2px; }
.sep { width: 1px; height: 16px; margin: 4px 2px 0 3px; background: #bdbdbd; flex: none; }
.hint { margin: 0 0 4px 6px; line-height: 14px; }
.panes { display: flex; gap: 6px; flex: 1; min-height: 0; padding: 0 4px; }
.canvas { position: relative; display: flex; flex-direction: column; flex: 1; min-width: 0; border: 1px solid #646464; }
.ruler-top { display: flex; height: 12px; flex: none; background: #fafad2; border-bottom: 1px solid #c8c8c8; }
.corner { width: 12px; background: #f0f0f0; border-right: 1px solid #c8c8c8; }
.guide { flex: 1; text-align: right; padding-right: 4px; color: #a9a9a9; line-height: 12px; white-space: nowrap; }
.ruler-left { flex: 1; width: 12px; background: #fafad2; border-right: 1px solid #c8c8c8; }
.drawing { position: absolute; inset: 0; width: 100%; height: 100%; }
.mid { fill: #2b6cb8; }
.vx { fill: #6eacfa; }
.rightcol { display: flex; flex-direction: column; gap: 8px; width: 256px; flex: none; }
.view { display: flex; flex-direction: column; flex: 300; min-height: 0; border: 1px solid #646464; }
.viewtools { display: flex; height: 25px; flex: none; padding-top: 1px; background: linear-gradient(#fdfdfd, #f0f0f0); border-radius: 4px; border-right: 1px solid #aaa; }
.scene { flex: 1; width: 100%; min-height: 0; }
.propwrap { position: relative; display: flex; gap: 1px; flex: 174; min-height: 0; padding: 0 2px 0 3px; }
.props { flex: 1; min-width: 0; overflow: hidden; }
.phead, .chead { display: flex; align-items: center; justify-content: space-between; height: 20px; padding: 0 5px 0 8px; background: #bad0eb; border-radius: 6px 6px 0 0; }
.round { width: 17px; height: 17px; border-radius: 50%; border: 1px solid #8d9dbb; background: #fdfdfe; box-shadow: 0 1px 1px #8090b0; }
.pgrid { margin: 2px 3px 0 3px; background: #f0f0f0; padding-left: 10px; }
.prow { display: flex; height: 20px; border-bottom: 1px solid #a0a0a0; }
.prow label { width: 118px; padding: 4px 0 0 6px; line-height: 14px; flex: none; white-space: nowrap; }
.prow.cur label { background: #0078d7; color: #fff; border-left: 1px solid #f0f0f0; padding-left: 5px; }
.pval { position: relative; display: flex; flex: 1; background: #fff; border-left: 1px solid #f0f0f0; }
.pval.muted { background: #f0f0f0; color: #777; }
.pval input { flex: 1; min-width: 0; width: 0; padding: 3px 0 0 4px; }
.pval.edit input { padding: 1px 0 0 3px; }
.textcaret { position: absolute; left: 15px; top: 3px; width: 1px; height: 13px; background: #000; }
.more { width: 16px; height: 17px; margin: 1px 1px 0 0; border: 1px solid #adadad; background: #e1e1e1; }
.marker { position: absolute; left: -35px; top: 28px; width: 60px; height: 62px; }

.side { display: flex; width: 119px; flex: none; gap: 1px; }
.cards { flex: 1; min-width: 0; overflow: hidden; display: flex; flex-direction: column; gap: 2px; }
.card { border: 1px solid #b9d3ee; border-radius: 6px; flex: none; overflow: hidden; }
.card.first { height: 42px; border-top: 0; border-radius: 0 0 6px 6px; }
.card.second { height: 198px; }
.card.third { flex: 1; min-height: 0; display: flex; flex-direction: column; color: #555; }
.card .chead { margin: -1px -1px 0; height: 21px; flex: none; background: linear-gradient(90deg, #c3d7ef, #adc4e2); color: #000; padding: 0 5px 0 9px; }
.graybox { height: 12px; margin: -1px 2px 0; border: 1px solid #000; background: #ababab; }
.altura { display: flex; align-items: center; gap: 2px; padding: 3px 0 0 7px; }
.altura span { width: 36px; }
.altura i { width: 1px; height: 22px; background: #aaa; }
.altura i + .sq { margin-left: -1px; }
.sigma { font-size: 12px; font-weight: bold; color: #333; }
.opt { display: flex; align-items: center; gap: 5px; height: 24px; padding-left: 5px; }
input[type=radio] { appearance: none; width: 13px; height: 13px; border: 1px solid #333; border-radius: 50%; background: #fff; }
input[type=radio]:checked { background: radial-gradient(circle, #222 0 3px, #fff 4px); }
input[type=checkbox] { appearance: none; position: relative; width: 13px; height: 13px; border: 1px solid #333; background: #fff; flex: none; }
input[type=checkbox]:disabled { border-color: #ccc; }
input[type=checkbox]:checked::before { content: ""; position: absolute; left: 3px; top: 0; width: 4px; height: 8px; border: solid #aaa; border-width: 0 2px 2px 0; transform: rotate(42deg); }
.axis { display: flex; align-items: center; height: 28px; padding-left: 6px; }
.axis label { width: 17px; }
.axis input { flex: 1; min-width: 0; height: 22px; border: 1px solid #a9a9a9; border-right: 0; margin-right: 2px; }
.load { padding-left: 7px; color: #444; white-space: nowrap; }
.chead label { display: flex; align-items: center; gap: 4px; }
.frow { display: flex; align-items: center; height: 28px; flex: none; padding-left: 7px; }
.frow label { width: 88px; white-space: nowrap; flex: none; }
.frow input { width: 3px; height: 22px; border: 1px solid #999; border-right: 0; }
.frow input.soft { border-color: #ccc; }
.chk { display: flex; align-items: center; gap: 4px; height: 22px; padding-left: 5px; white-space: nowrap; flex: none; }
fieldset { display: flex; flex-direction: column; flex: 1; min-width: 0; min-height: 0; margin: 6px 2px 5px 3px; padding: 0 4px 4px 6px; border: 1px solid #dcdcdc; overflow: hidden; }
legend { color: #a0a0a0; padding: 0 2px; line-height: 14px; }
.ftext { padding: 2px 0 0 2px; line-height: 14px; white-space: nowrap; overflow: hidden; }
.chk.in { height: 34px; padding: 0 0 0 2px; overflow: hidden; }
.gridbox { flex: 1; border: 1px solid #000; border-width: 1px 0 1px 1px; background: #ababab; overflow: hidden; }
table { border-collapse: collapse; table-layout: fixed; width: 100%; background: #fff; color: #000; }
th, td { height: 21px; padding: 0 0 0 7px; border: 1px solid #a0a0a0; border-top: 0; border-left: 0; font-weight: normal; text-align: left; }
.rh { width: 19px; }
.nx { width: 3px; padding: 0; border-right: 0; }
</style>
